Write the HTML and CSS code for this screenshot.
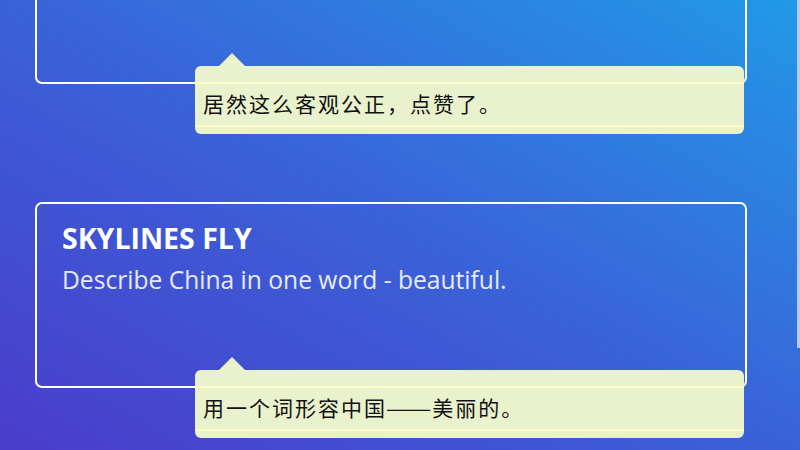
FILE: index.html
```html
<!DOCTYPE html>
<html lang="zh">
<head>
<meta charset="utf-8">
<link rel="stylesheet" href="styles.css">
</head>
<body>
<div class="page">
  <ul class="list">
    <li class="item">
      <div class="card">
        <h2 class="title">SKYLINES FLY</h2>
        <p class="desc">Describe China in one word - beautiful.</p>
      </div>
      <div class="tip"><p class="tip-text">居然这么客观公正，点赞了。</p></div>
    </li>
    <li class="item">
      <div class="card">
        <h2 class="title">SKYLINES FLY</h2>
        <p class="desc">Describe China in one word - beautiful.</p>
      </div>
      <div class="tip"><p class="tip-text">用一个词形容中国<span class="dash">——</span>美丽的。</p></div>
    </li>
  </ul>
  <div class="edge"></div>
</div>
</body>
</html>
```

FILE: styles.css
```css
html, body {
  margin: 0;
  padding: 0;
  width: 800px;
  height: 450px;
  overflow: hidden;
}
body {
  background: linear-gradient(to top right, #4a3ccb 0%, #3a62d8 50%, #2199e7 100%);
  font-family: "Open Sans", "Noto Sans CJK SC", sans-serif;
}
.page {
  position: relative;
  width: 800px;
  height: 450px;
}
.list {
  list-style: none;
  margin: -102px 0 0 0;
  padding: 0 0 0 35px;
  width: 712px;
  display: flex;
  flex-direction: column;
  gap: 68px;
}
.item {
  display: flex;
  flex-direction: column;
}
.card {
  box-sizing: border-box;
  height: 186px;
  border: 2px solid #ffffff;
  border-radius: 7px;
  padding: 14px 25px;
}
.title {
  margin: 0;
  font-size: 28.5px;
  font-weight: 700;
  color: #ffffff;
  line-height: 40px;
}
.desc {
  margin: 6px 0 0 0;
  font-size: 24.6px;
  color: #e6ebff;
  line-height: 32px;
}
.tip {
  position: relative;
  box-sizing: border-box;
  margin: -18px 0 0 160px;
  width: 549px;
  height: 68px;
  background: #eaf2cd;
  border-radius: 6px;
  padding-top: 16px;
}
.tip::before {
  content: "";
  position: absolute;
  left: 24px;
  top: -13px;
  border-left: 13px solid transparent;
  border-right: 13px solid transparent;
  border-bottom: 13px solid #eaf2cd;
}
.tip-text {
  margin: 0;
  height: 41px;
  border-top: 2px solid #fbfbc6;
  border-bottom: 2px solid #fbfbc6;
  padding-left: 8px;
  font-family: "Noto Sans CJK SC", sans-serif;
  font-size: 21px;
  letter-spacing: 2px;
  line-height: 39px;
  color: #111111;
}
.dash {
  letter-spacing: 0;
  display: inline-block;
  transform: scaleX(1.3);
  margin: 0 6px 0 4px;
}
.edge {
  position: absolute;
  right: 0;
  top: 0;
  width: 3px;
  height: 450px;
  background: #b4ccf4;
}
```
